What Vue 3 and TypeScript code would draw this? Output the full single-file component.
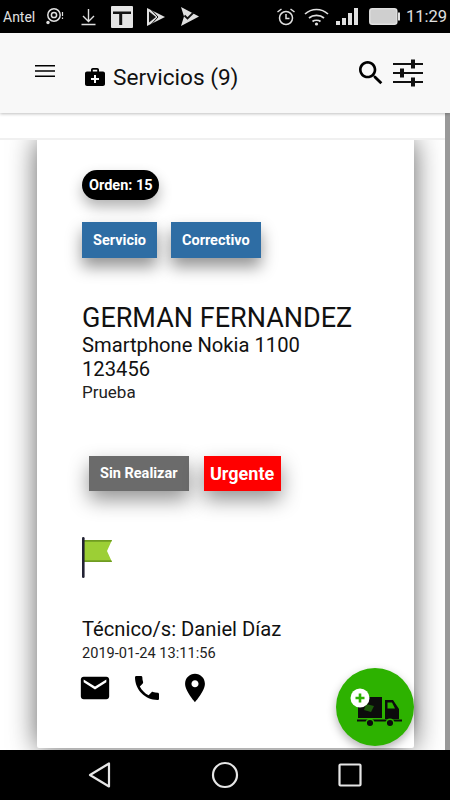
<script setup lang="ts">
const tags = ['Servicio', 'Correctivo'];
</script>

<template>
  <div class="phone">
    <div class="status">
      <div class="status-left">
        <span class="carrier">Antel</span>
        <svg class="s-target" width="18" height="20" viewBox="0 0 18 20" fill="none" stroke="#e0e0e0">
          <circle cx="8" cy="8" r="6.200" stroke-width="1.500" />
          <circle cx="8" cy="8" r="2.600" stroke-width="1.500" />
          <circle cx="2" cy="15.500" r="1.700" fill="#e0e0e0" stroke="none" />
          <path d="M16.500 5v4M16.500 10.500v1.500" stroke-width="1.200" />
        </svg>
        <svg class="s-down" width="15" height="18" viewBox="0 0 15 18" fill="none" stroke="#e0e0e0" stroke-width="1.400">
          <path d="M7.500 1v12M2 8l5.500 5.500L13 8M.500 16.500h14" />
        </svg>
        <svg class="s-news" width="22" height="22" viewBox="0 0 22 22">
          <rect width="22" height="22" rx="1" fill="#e4e4e4" />
          <path d="M2 5.500h18v2.400h-8.800V19H8.200V7.900H2z" fill="#111" />
        </svg>
        <svg class="s-play" width="18" height="18" viewBox="0 0 18 18">
          <path d="M0 0l18 9-18 9z" fill="#e0e0e0" />
          <path d="M2 3.500l7 5.500-7 5.500z" fill="#111" />
          <path d="M4 1.500l7 7.500-7 7.500" fill="none" stroke="#111" stroke-width="1" />
        </svg>
        <svg class="s-check" width="18" height="19" viewBox="0 0 18 19">
          <path d="M0 0l18 9.500L0 19l3-9.500z" fill="#e0e0e0" />
          <path d="M3.500 8.500l3 3 6-6" fill="none" stroke="#111" stroke-width="1.800" />
        </svg>
      </div>
      <div class="status-right">
        <svg width="20" height="20" viewBox="0 0 20 20" fill="none" stroke="#e0e0e0" stroke-width="1.500">
          <circle cx="10" cy="11" r="6.500" />
          <path d="M10 7v4.500h3.500M1.500 5l4-3M18.500 5l-4-3" />
        </svg>
        <svg class="s-wifi" width="25" height="18" viewBox="0 0 25 18" fill="none" stroke="#e0e0e0" stroke-width="1.700">
          <path d="M1 6c6.500-6 16.500-6 23 0M5 10c4-3.600 11-3.600 15 0M8.500 13.500c2-1.700 6-1.700 8 0" />
          <circle cx="12.500" cy="16" r="1.600" fill="#e0e0e0" stroke="none" />
        </svg>
        <div class="signal">
          <i style="height: 4px" /><i style="height: 7px" /><i style="height: 12px" /><i style="height: 17px" />
        </div>
        <svg class="s-batt" width="31" height="17" viewBox="0 0 31 17">
          <rect x=".8" y=".8" width="27" height="15.400" rx="2.500" fill="#cfcfcf" stroke="#e0e0e0" stroke-width="1.500" />
          <rect x="29" y="4.500" width="2" height="8" fill="#e0e0e0" />
        </svg>
        <span class="clock">11:29</span>
      </div>
    </div>

    <header class="toolbar">
      <svg class="menu" width="24" height="24" viewBox="0 0 24 24"><path d="M2 18h20v-1.400H2zm0-5.300h20v-1.400H2zM2 6v1.400h20V6z" /></svg>
      <div class="title">
        <svg width="24" height="24" viewBox="0 0 24 24">
          <path d="M20 6.500h-4V4.800c0-1-.8-1.800-1.800-1.800H9.800C8.800 3 8 3.800 8 4.800v1.700H4c-1.100 0-2 .9-2 2V19c0 1.100.9 2 2 2h16c1.100 0 2-.9 2-2V8.500c0-1.100-.9-2-2-2zM9.800 4.800h4.400v1.700H9.800zM16 15h-3v3h-2v-3H8v-2h3v-3h2v3h3z" />
        </svg>
        <span>Servicios (9)</span>
      </div>
      <div class="toolbar-actions">
        <svg width="32" height="32" viewBox="0 0 24 24"><path d="M15.500 14h-.79l-.28-.27C15.410 12.590 16 11.110 16 9.500 16 5.910 13.090 3 9.500 3S3 5.910 3 9.500 5.910 16 9.500 16c1.610 0 3.090-.59 4.230-1.570l.27.28v.79l5 4.990L20.490 19l-4.990-5zm-6 0C7.010 14 5 11.990 5 9.500S7.010 5 9.500 5 14 7.010 14 9.500 11.990 14 9.500 14z" /></svg>
        <svg width="32" height="32" viewBox="0 0 32 32" fill="none" stroke="#111">
          <path d="M1 7h30M1 16h30M1 25h30" stroke-width="2" />
          <path d="M21 2.500v9M10 11.500v9M21 20.500v9" stroke-width="4" />
        </svg>
      </div>
    </header>

    <div class="body">
      <div class="scroll">
        <div class="subbar" />
        <main class="content">
          <section class="card">
            <span class="order">Orden: 15</span>
            <div class="tags">
              <span v-for="tag in tags" :key="tag" class="tag">{{ tag }}</span>
            </div>
            <h2 class="client">GERMAN FERNANDEZ</h2>
            <p class="device">Smartphone Nokia 1100</p>
            <p class="device">123456</p>
            <p class="note">Prueba</p>
            <div class="states">
              <span class="state grey">Sin Realizar</span>
              <span class="state red">Urgente</span>
            </div>
            <svg class="flag" width="32" height="42" viewBox="0 0 32 42">
              <path d="M3 3h28l-5 11 5 11H3z" fill="#9ccf35" />
              <path d="M3 3h28l-.8 1.800H3zM3 23.200h27.200l.8 1.800H3z" fill="#6f9c22" />
              <rect x="1" y="0" width="2.600" height="41" rx="1.300" fill="#222233" />
            </svg>
            <p class="tech">Técnico/s: Daniel Díaz</p>
            <p class="date">2019-01-24 13:11:56</p>
            <div class="contact">
              <svg width="34" height="34" viewBox="0 0 24 24"><path d="M20 4H4c-1.100 0-1.990.9-1.990 2L2 18c0 1.100.9 2 2 2h16c1.100 0 2-.9 2-2V6c0-1.100-.9-2-2-2zm0 4l-8 5-8-5V6l8 5 8-5v2z" /></svg>
              <svg class="phone-icon" width="32" height="32" viewBox="0 0 24 24"><path d="M6.620 10.790c1.440 2.830 3.760 5.140 6.590 6.590l2.200-2.200c.27-.27.67-.36 1.020-.24 1.120.37 2.330.57 3.570.57.55 0 1 .45 1 1V20c0 .55-.45 1-1 1-9.390 0-17-7.610-17-17 0-.55.45-1 1-1h3.500c.55 0 1 .45 1 1 0 1.250.2 2.450.57 3.570.11.35.03.74-.25 1.020l-2.200 2.200z" /></svg>
              <svg class="pin-icon" width="34" height="34" viewBox="0 0 24 24"><path d="M12 2C8.130 2 5 5.130 5 9c0 5.250 7 13 7 13s7-7.750 7-13c0-3.870-3.130-7-7-7zm0 9.500c-1.380 0-2.500-1.120-2.500-2.500s1.120-2.500 2.500-2.500 2.500 1.120 2.500 2.500-1.120 2.500-2.500 2.500z" /></svg>
            </div>
          </section>
          <button class="fab">
            <svg width="54" height="46" viewBox="0 0 54 46">
              <path d="M10 13h24v21H10zM37 16h8l6 9v10H37z" fill="#0c0c0c" />
              <path d="M9 35.500h45v2H9z" fill="#0c0c0c" />
              <path d="M39.500 18.500h4.500l3 6h-7.500z" fill="#2db200" />
              <path d="M18 20l8 2-3 6-7-2z" fill="#1c5c0a" />
              <circle cx="22" cy="39" r="3.800" fill="#0c0c0c" stroke="#2db200" stroke-width="1.500" />
              <circle cx="42" cy="39" r="3.800" fill="#0c0c0c" stroke="#2db200" stroke-width="1.500" />
              <circle cx="12" cy="14" r="9.500" fill="#fff" />
              <path d="M10.700 9.500h2.600v3.200h3.200v2.600h-3.200v3.200h-2.600v-3.200H7.500v-2.600h3.200z" fill="#2db200" />
            </svg>
          </button>
        </main>
      </div>
      <div class="edge" />
    </div>

    <nav class="navbar">
      <svg width="24" height="26" viewBox="0 0 24 26" fill="none" stroke="#e6e6e6" stroke-width="2.200" stroke-linejoin="round"><path d="M21 1.500v23L2 13z" /></svg>
      <svg width="28" height="28" viewBox="0 0 28 28" fill="none" stroke="#e6e6e6" stroke-width="2.200"><circle cx="14" cy="14" r="12" /></svg>
      <svg width="24" height="24" viewBox="0 0 24 24" fill="none" stroke="#e6e6e6" stroke-width="2.200" stroke-linejoin="round"><rect x="1.500" y="1.500" width="21" height="21" rx="1" /></svg>
    </nav>
  </div>
</template>

<style scoped>
.phone {
  width: 450px;
  height: 800px;
  display: flex;
  flex-direction: column;
  overflow: hidden;
  background: #fff;
  font-family: Roboto, sans-serif;
  color: #111;
}

.status {
  height: 33px;
  flex: none;
  background: #000;
  display: flex;
  justify-content: space-between;
  align-items: center;
  padding: 0 3px;
  color: #e0e0e0;
  font-size: 14px;
}

.status-left,
.status-right {
  display: flex;
  align-items: center;
}

.carrier {
  width: 43px;
}

.s-down {
  margin-left: 17px;
}

.s-news {
  margin-left: 15px;
}

.s-play {
  margin-left: 14px;
}

.s-check {
  margin-left: 16px;
}

.s-wifi {
  margin-left: 8px;
}

.signal {
  display: flex;
  align-items: flex-end;
  gap: 2px;
  margin-left: 7px;
  height: 17px;
}

.signal i {
  width: 4px;
  background: #e0e0e0;
}

.s-batt {
  margin-left: 11px;
}

.clock {
  margin-left: 6px;
  font-size: 16.500px;
}

.toolbar {
  height: 80px;
  flex: none;
  background: #f8f8f8;
  box-shadow: 0 1px 3px rgba(0, 0, 0, 0.25);
  display: flex;
  align-items: center;
  padding: 0 26px 0 33px;
  position: relative;
  z-index: 2;
}

.menu {
  margin-top: -4px;
}

.title {
  display: flex;
  align-items: center;
  gap: 6px;
  margin-left: 26px;
  margin-top: 8px;
  font-size: 22.600px;
}

.toolbar-actions {
  margin-left: auto;
  display: flex;
  align-items: center;
  gap: 5px;
}

.body {
  flex: 1;
  min-height: 0;
  display: flex;
}

.scroll {
  flex: 1;
  min-width: 0;
  display: flex;
  flex-direction: column;
}

.edge {
  width: 5px;
  flex: none;
  background: #999;
}

.subbar {
  height: 27px;
  flex: none;
  border-bottom: 2px solid #f0f0f0;
  box-sizing: border-box;
}

.content {
  flex: 1;
  min-height: 0;
  display: flex;
  position: relative;
  overflow: hidden;
  padding: 0 0 2px 37px;
}

.card {
  width: 377px;
  flex: none;
  box-sizing: border-box;
  padding: 30px 0 0 45px;
  background: #fff;
  box-shadow: 0 0 28px rgba(0, 0, 0, 0.62);
  border-radius: 0 0 2px 2px;
}

.order {
  display: block;
  width: fit-content;
  height: 30px;
  line-height: 31px;
  padding: 0 6px 0 7px;
  border-radius: 15px;
  background: #000;
  color: #fff;
  font-size: 14.500px;
  font-weight: 700;
  box-shadow: 0 7px 14px rgba(0, 0, 0, 0.3);
}

.tags {
  display: flex;
  gap: 14px;
  margin-top: 22px;
}

.tag {
  height: 36px;
  line-height: 38px;
  padding: 0 11px;
  background: #2e6da4;
  color: #fff;
  font-size: 14.500px;
  font-weight: 700;
  box-shadow: 0 9px 16px rgba(0, 0, 0, 0.42);
}

.client {
  margin: 45px 0 0;
  font-size: 27px;
  line-height: 30px;
  font-weight: 400;
}

.device {
  margin: 0;
  font-size: 20.200px;
  line-height: 24px;
}

.note {
  margin: 0;
  font-size: 17px;
  line-height: 22px;
  color: #222;
}

.states {
  display: flex;
  gap: 15px;
  margin: 53px 0 0 7px;
}

.state {
  height: 35px;
  line-height: 35px;
  color: #fff;
  font-weight: 700;
  box-shadow: 0 9px 20px rgba(0, 0, 0, 0.42);
}

.grey {
  padding: 0 11px;
  background: #6b6b6b;
  font-size: 14.500px;
}

.red {
  padding: 0 6.500px;
  background: #f00;
  font-size: 18px;
}

.flag {
  display: block;
  margin: 46px 0 0 -1px;
}

.tech {
  margin: 38px 0 0;
  font-size: 20.200px;
  line-height: 24px;
}

.date {
  margin: 2px 0 0;
  font-size: 14.600px;
  line-height: 20px;
  color: #222;
}

.contact {
  display: flex;
  align-items: center;
  margin: 8px 0 0 -4px;
}

.phone-icon {
  margin-left: 19px;
}

.pin-icon {
  margin-left: 15px;
}

.fab {
  position: absolute;
  left: 336px;
  top: 528px;
  width: 78px;
  height: 78px;
  padding: 0;
  border: none;
  border-radius: 50%;
  background: #2db200;
  box-shadow: 0 4px 10px rgba(0, 0, 0, 0.3);
  display: flex;
  align-items: center;
  justify-content: center;
}

.navbar {
  height: 50px;
  flex: none;
  background: #000;
  display: flex;
  align-items: center;
  justify-content: space-between;
  padding: 0 88px;
  position: relative;
  z-index: 2;
}
</style>

<style>
html,
body {
  margin: 0;
  background: #fff;
}
</style>
